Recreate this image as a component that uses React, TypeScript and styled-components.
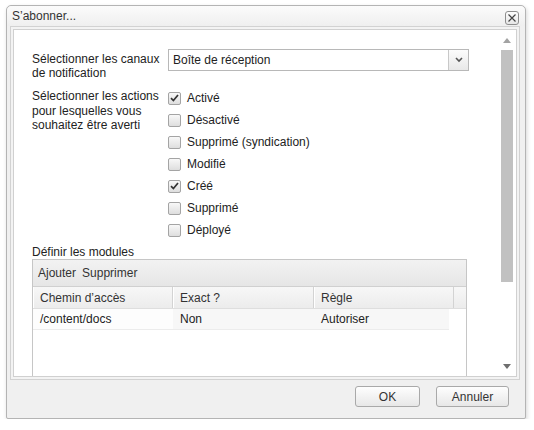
import styled, { createGlobalStyle } from 'styled-components';

const GlobalStyle = createGlobalStyle`
  body {
    margin: 0;
    background: #fff;
    font-family: "Liberation Sans", Arial, sans-serif;
    font-size: 12px;
    color: #222;
  }
`;

const Page = styled.div`
  padding: 5px 0 0 6px;
`;

const Window = styled.div`
  width: 520px;
  height: 414px;
  box-sizing: border-box;
  border: 1px solid #b4b4b4;
  border-radius: 5px 5px 2px 2px;
  background: #f0f0f0;
  box-shadow: 1px 2px 4px rgba(0, 0, 0, 0.16);
  display: flex;
  flex-direction: column;
`;

const Header = styled.div`
  height: 20px;
  display: flex;
  align-items: center;
  justify-content: space-between;
  padding: 0 6px 0 5px;
  border-radius: 5px 5px 0 0;
  background: linear-gradient(#fbfbfb, #efefef);
  h1 {
    margin: 0;
    font-size: 12px;
    font-weight: normal;
    color: #333;
  }
`;

const CloseButton = styled.button`
  width: 14px;
  height: 14px;
  padding: 0;
  margin-top: 3px;
  border: 1px solid #8e8e8e;
  border-radius: 3px;
  background: linear-gradient(#fdfdfd, #e6e6e6);
  display: flex;
  align-items: center;
  justify-content: center;
`;

const Frame = styled.div`
  height: 354px;
  box-sizing: border-box;
  margin: 0 5px 0 3px;
  padding: 2px;
  border: 1px solid #d2d2d2;
  background: #f3f3f3;
  display: flex;
`;

const Body = styled.div`
  flex: 1;
  border: 1px solid #d0d0d0;
  background: #fff;
  display: flex;
  overflow: hidden;
`;

const Content = styled.div`
  flex: 1;
  overflow: hidden;
  padding: 19px 0 0 18px;
`;

const Form = styled.div`
  width: 437px;
`;

const FieldRow = styled.div<{ $gap?: number }>`
  display: flex;
  margin-top: ${p => p.$gap ?? 0}px;
`;

const Label = styled.div<{ $top: number; $lh: number }>`
  width: 136px;
  flex: none;
  padding-top: ${p => p.$top}px;
  line-height: ${p => p.$lh}px;
  color: #222;
`;

const Select = styled.div`
  width: 301px;
  height: 22px;
  box-sizing: border-box;
  border: 1px solid #b8b8b8;
  display: flex;
  align-items: center;
  span {
    flex: 1;
    padding-left: 4px;
  }
`;

const SelectArrow = styled.div`
  width: 19px;
  height: 100%;
  border-left: 1px solid #c8c8c8;
  background: linear-gradient(#fcfcfc, #e8e8e8);
  display: flex;
  align-items: center;
  justify-content: center;
`;

const CheckList = styled.div`
  display: flex;
  flex-direction: column;
`;

const CheckItem = styled.label`
  height: 22px;
  display: flex;
  align-items: center;
  gap: 6px;
  color: #222;
`;

const Box = styled.span`
  width: 13px;
  height: 13px;
  box-sizing: border-box;
  border: 1px solid #a4a4a4;
  border-radius: 2px;
  background: linear-gradient(#f8f8f8, #dedede);
  display: flex;
  align-items: center;
  justify-content: center;
`;

const SectionTitle = styled.div`
  margin-top: 5px;
  line-height: 13px;
  color: #222;
`;

const Grid = styled.div`
  width: 435px;
  height: 140px;
  box-sizing: border-box;
  border: 1px solid #c6c6c6;
`;

const Toolbar = styled.div`
  height: 26px;
  border-bottom: 1px solid #d0d0d0;
  background: linear-gradient(#f2f2f2, #e6e6e6);
  display: flex;
  align-items: center;
  gap: 6px;
  padding-left: 5px;
  color: #333;
`;

const HeaderRow = styled.div`
  height: 21px;
  display: flex;
  border-bottom: 1px solid #dedede;
  background: linear-gradient(#f7f7f7, #ececec);
`;

const HeaderCell = styled.div<{ $w: number }>`
  width: ${p => p.$w}px;
  flex: none;
  box-sizing: border-box;
  padding-left: 7px;
  display: flex;
  align-items: center;
  border-right: 1px solid #d3d3d3;
  box-shadow: inset 1px 0 0 #fff;
  color: #333;
`;

const DataRow = styled.div`
  width: 416px;
  height: 20px;
  display: flex;
  background: #f7f7f7;
  border-bottom: 1px solid #ececec;
`;

const DataCell = styled.div<{ $w: number; $light?: boolean }>`
  width: ${p => p.$w}px;
  flex: none;
  box-sizing: border-box;
  padding-left: 7px;
  display: flex;
  align-items: center;
  background: ${p => (p.$light ? '#fdfdfd' : 'transparent')};
  color: #222;
`;

const ScrollBar = styled.div`
  width: 13px;
  margin: 4px 3px 4px 0;
  display: flex;
  flex-direction: column;
  align-items: center;
`;

const Arrow = styled.div`
  height: 12px;
  display: flex;
  align-items: center;
  justify-content: center;
`;

const Thumb = styled.div`
  width: 12px;
  height: 232px;
  margin-top: 4px;
  background: #c1c1c1;
`;

const Track = styled.div`
  flex: 1;
`;

const Footer = styled.div`
  flex: 1;
  display: flex;
  justify-content: flex-end;
  align-items: flex-start;
  gap: 16px;
  padding: 6px 16px 0 0;
`;

const Button = styled.button<{ $w: number }>`
  width: ${p => p.$w}px;
  height: 21px;
  border: 1px solid #a9a9a9;
  border-radius: 3px;
  background: linear-gradient(#fefefe, #e7e7e7);
  font-family: "Liberation Sans", Arial, sans-serif;
  font-size: 12px;
  color: #333;
  padding: 0;
`;

const actions = [
  { label: 'Activé', checked: true },
  { label: 'Désactivé', checked: false },
  { label: 'Supprimé (syndication)', checked: false },
  { label: 'Modifié', checked: false },
  { label: 'Créé', checked: true },
  { label: 'Supprimé', checked: false },
  { label: 'Déployé', checked: false },
];

const Check = () => (
  <svg width="9" height="8" viewBox="0 0 9 8">
    <path d="M1 4.2 L3.4 6.6 L8 1" fill="none" stroke="#333" strokeWidth="1.7" />
  </svg>
);

export default function App() {
  return (
    <Page>
      <GlobalStyle />
      <Window>
        <Header>
          <h1>S’abonner...</h1>
          <CloseButton>
            <svg width="8" height="8" viewBox="0 0 8 8">
              <path d="M0.5 0.5 L7.5 7.5 M7.5 0.5 L0.5 7.5" stroke="#444" strokeWidth="1.2" />
            </svg>
          </CloseButton>
        </Header>
        <Frame>
          <Body>
            <Content>
              <Form>
                <FieldRow>
                  <Label $top={3} $lh={14}>
                    Sélectionner les canaux de notification
                  </Label>
                  <Select>
                    <span>Boîte de réception</span>
                    <SelectArrow>
                      <svg width="8" height="6" viewBox="0 0 8 6">
                        <path d="M1 1 L4 4 L7 1" fill="none" stroke="#555" strokeWidth="1.6" />
                      </svg>
                    </SelectArrow>
                  </Select>
                </FieldRow>
                <FieldRow $gap={7}>
                  <Label $top={2} $lh={14.5}>
                    Sélectionner les actions pour lesquelles vous souhaitez être averti
                  </Label>
                  <CheckList>
                    {actions.map(a => (
                      <CheckItem key={a.label}>
                        <Box>{a.checked && <Check />}</Box>
                        {a.label}
                      </CheckItem>
                    ))}
                  </CheckList>
                </FieldRow>
                <SectionTitle>Définir les modules</SectionTitle>
                <Grid>
                  <Toolbar>
                    <span>Ajouter</span>
                    <span>Supprimer</span>
                  </Toolbar>
                  <HeaderRow>
                    <HeaderCell $w={140}>Chemin d’accès</HeaderCell>
                    <HeaderCell $w={141}>Exact ?</HeaderCell>
                    <HeaderCell $w={140}>Règle</HeaderCell>
                  </HeaderRow>
                  <DataRow>
                    <DataCell $w={140} $light>/content/docs</DataCell>
                    <DataCell $w={141}>Non</DataCell>
                    <DataCell $w={135}>Autoriser</DataCell>
                  </DataRow>
                </Grid>
              </Form>
            </Content>
            <ScrollBar>
              <Arrow>
                <svg width="8" height="5" viewBox="0 0 8 5">
                  <path d="M0 5 L4 0 L8 5 Z" fill="#a3a3a3" />
                </svg>
              </Arrow>
              <Thumb />
              <Track />
              <Arrow>
                <svg width="8" height="5" viewBox="0 0 8 5">
                  <path d="M0 0 L4 5 L8 0 Z" fill="#6f6f6f" />
                </svg>
              </Arrow>
            </ScrollBar>
          </Body>
        </Frame>
        <Footer>
          <Button $w={65}>OK</Button>
          <Button $w={73}>Annuler</Button>
        </Footer>
      </Window>
    </Page>
  );
}
